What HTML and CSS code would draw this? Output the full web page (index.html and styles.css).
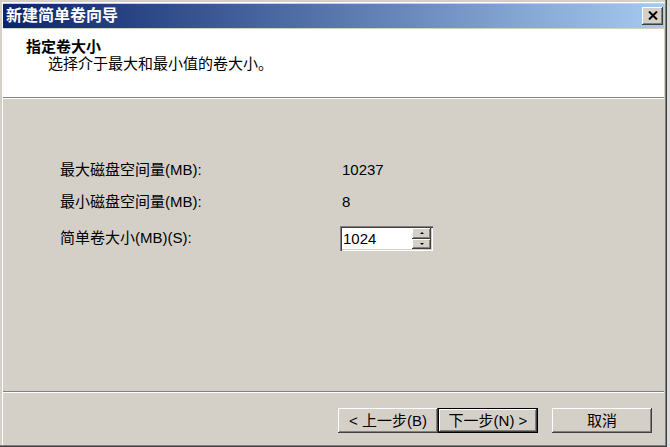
FILE: index.html
```html
<!DOCTYPE html>
<html lang="zh-CN">
<head>
<meta charset="utf-8">
<title>新建简单卷向导</title>
<link rel="stylesheet" href="styles.css">
</head>
<body>
<div class="window">
  <div class="titlebar">
    <span class="title">新建简单卷向导</span>
    <span class="close">
      <svg width="10" height="9" viewBox="0 0 10 9"><path d="M1 0.5 L9 8.5 M9 0.5 L1 8.5" stroke="#000" stroke-width="2" fill="none"/></svg>
    </span>
  </div>
  <div class="header">
    <div class="h-title">指定卷大小</div>
    <div class="h-sub">选择介于最大和最小值的卷大小。</div>
  </div>
  <div class="sep"></div>
  <div class="content">
    <div class="form">
      <div class="label">最大磁盘空间量(MB):</div>
      <div class="value">10237</div>
      <div class="label">最小磁盘空间量(MB):</div>
      <div class="value">8</div>
      <div class="label label-spin">简单卷大小(MB)(S):</div>
      <div class="spinner">
        <span class="spin-text">1024</span>
        <span class="spin-btns">
          <span class="spin-btn"><span class="arrow-up"></span></span>
          <span class="spin-btn"><span class="arrow-down"></span></span>
        </span>
      </div>
    </div>
  </div>
  <div class="sep"></div>
  <div class="footer">
    <span class="btn">&lt; 上一步(B)</span>
    <span class="btn default">下一步(N) &gt;</span>
    <span class="btn cancel">取消</span>
  </div>
</div>
</body>
</html>
```
FILE: styles.css
```css
html, body {
  margin: 0;
  padding: 0;
}
body {
  width: 670px;
  height: 447px;
  overflow: hidden;
  background: #dcdcdc;
  font-family: "Liberation Sans", "Noto Sans CJK SC", sans-serif;
  font-size: 15px;
  color: #000;
}
.window {
  width: 667px;
  height: 447px;
  box-sizing: border-box;
  padding: 4px 3px 3px 3px;
  background: #d4d0c8;
  box-shadow: inset -1px -1px 0 #404040, inset -2px -2px 0 #808080, inset 2px 2px 0 #d4d0c8, inset 3px 3px 0 #ffffff;
  display: flex;
  flex-direction: column;
}
.titlebar {
  height: 24px;
  flex: none;
  margin-bottom: 1px;
  background: linear-gradient(to right, #0a246a, #a6caf0);
  display: flex;
  align-items: center;
  justify-content: space-between;
  padding: 0 1px 0 3px;
}
.title {
  color: #fff;
  font-weight: bold;
  font-size: 16px;
  line-height: 18px;
}
.close {
  width: 21px;
  height: 18px;
  box-sizing: border-box;
  background: #d4d0c8;
  box-shadow: inset -1px -1px 0 #404040, inset 1px 1px 0 #ffffff, inset -2px -2px 0 #808080;
  display: flex;
  align-items: center;
  justify-content: center;
}
.close svg {
  display: block;
  margin-top: -1px;
}
.header {
  height: 68px;
  flex: none;
  box-sizing: border-box;
  background: #fff;
  padding: 9px 0 0 23px;
}
.h-title {
  font-weight: bold;
  line-height: 17px;
}
.h-sub {
  line-height: 17px;
  padding-left: 22px;
}
.sep {
  height: 1px;
  flex: none;
  background: #808080;
  border-bottom: 1px solid #fff;
}
.content {
  flex: 1;
  padding: 61px 0 0 57px;
}
.form {
  display: grid;
  grid-template-columns: 280px 93px;
  grid-template-rows: 20px 20px 25px;
  row-gap: 12px;
  align-items: start;
}
.form > :nth-child(5),
.form > :nth-child(6) {
  margin-top: 2px;
}
.label, .value {
  line-height: 20px;
  white-space: nowrap;
}
.value {
  padding-left: 2px;
}
.label-spin {
  margin-top: 4px !important;
}
.spinner {
  width: 93px;
  height: 25px;
  box-sizing: border-box;
  background: #fff;
  padding: 2px;
  box-shadow: inset 1px 1px 0 #808080, inset 2px 2px 0 #404040, inset -1px -1px 0 #ffffff, inset -2px -2px 0 #d4d0c8;
  display: flex;
  align-items: stretch;
}
.spin-text {
  flex: 1;
  padding-left: 1px;
  line-height: 21px;
}
.spin-btns {
  width: 19px;
  display: flex;
  flex-direction: column;
}
.spin-btn {
  flex: 1;
  background: #d4d0c8;
  box-shadow: inset -1px -1px 0 #404040, inset 1px 1px 0 #ffffff, inset -2px -2px 0 #808080;
  display: flex;
  align-items: center;
  justify-content: center;
}
.arrow-up {
  width: 0;
  height: 0;
  border-left: 2px solid transparent;
  border-right: 2px solid transparent;
  border-bottom: 2px solid #000;
}
.arrow-down {
  width: 0;
  height: 0;
  border-left: 2px solid transparent;
  border-right: 2px solid transparent;
  border-top: 2px solid #000;
}
.footer {
  flex: none;
  height: 51px;
  box-sizing: border-box;
  padding: 15px 12px 0 0;
  display: flex;
  justify-content: flex-end;
  align-items: flex-start;
}
.btn {
  width: 100px;
  height: 25px;
  box-sizing: border-box;
  background: #d4d0c8;
  box-shadow: inset -1px -1px 0 #404040, inset 1px 1px 0 #ffffff, inset -2px -2px 0 #808080;
  display: flex;
  align-items: center;
  justify-content: center;
  line-height: 20px;
  white-space: nowrap;
}
.btn.default {
  box-shadow: inset 0 0 0 1px #000, inset -2px -2px 0 #404040, inset 2px 2px 0 #ffffff, inset -3px -3px 0 #808080;
}
.btn.cancel {
  margin-left: 14px;
}
```
